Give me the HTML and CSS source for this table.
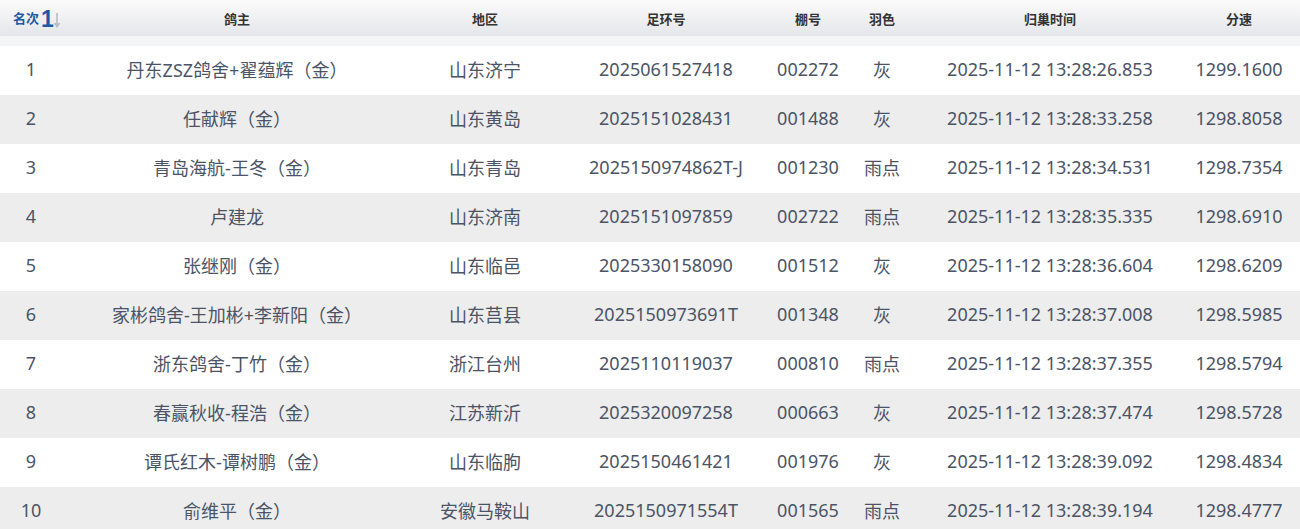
FILE: index.html
```html
<!DOCTYPE html>
<html lang="zh">
<head>
<meta charset="utf-8">
<link rel="stylesheet" href="styles.css">
</head>
<body>
<table class="grid">
  <colgroup>
    <col class="c1"><col class="c2"><col class="c3"><col class="c4"><col class="c5"><col class="c6"><col class="c7"><col class="c8">
  </colgroup>
  <thead>
    <tr class="head">
      <th class="sorted">名次<span class="sort"><span class="one">1</span><svg width="6" height="16" viewBox="0 0 6 16"><path d="M3 1V14M0.5 11L3 14.5L5.5 11" fill="none" stroke="#b9bcc2" stroke-width="1.6"/></svg></span></th>
      <th>鸽主</th><th>地区</th><th>足环号</th><th>棚号</th><th>羽色</th><th>归巢时间</th><th>分速</th>
    </tr>
    <tr class="spacer"><td colspan="8"></td></tr>
  </thead>
  <tbody>
    <tr><td>1</td><td>丹东ZSZ鸽舍+翟蕴辉（金）</td><td>山东济宁</td><td>2025061527418</td><td>002272</td><td>灰</td><td>2025-11-12 13:28:26.853</td><td>1299.1600</td></tr>
    <tr><td>2</td><td>任献辉（金）</td><td>山东黄岛</td><td>2025151028431</td><td>001488</td><td>灰</td><td>2025-11-12 13:28:33.258</td><td>1298.8058</td></tr>
    <tr><td>3</td><td>青岛海航-王冬（金）</td><td>山东青岛</td><td>2025150974862T-J</td><td>001230</td><td>雨点</td><td>2025-11-12 13:28:34.531</td><td>1298.7354</td></tr>
    <tr><td>4</td><td>卢建龙</td><td>山东济南</td><td>2025151097859</td><td>002722</td><td>雨点</td><td>2025-11-12 13:28:35.335</td><td>1298.6910</td></tr>
    <tr><td>5</td><td>张继刚（金）</td><td>山东临邑</td><td>2025330158090</td><td>001512</td><td>灰</td><td>2025-11-12 13:28:36.604</td><td>1298.6209</td></tr>
    <tr><td>6</td><td>家彬鸽舍-王加彬+李新阳（金）</td><td>山东莒县</td><td>2025150973691T</td><td>001348</td><td>灰</td><td>2025-11-12 13:28:37.008</td><td>1298.5985</td></tr>
    <tr><td>7</td><td>浙东鸽舍-丁竹（金）</td><td>浙江台州</td><td>2025110119037</td><td>000810</td><td>雨点</td><td>2025-11-12 13:28:37.355</td><td>1298.5794</td></tr>
    <tr><td>8</td><td>春赢秋收-程浩（金）</td><td>江苏新沂</td><td>2025320097258</td><td>000663</td><td>灰</td><td>2025-11-12 13:28:37.474</td><td>1298.5728</td></tr>
    <tr><td>9</td><td>谭氏红木-谭树鹏（金）</td><td>山东临朐</td><td>2025150461421</td><td>001976</td><td>灰</td><td>2025-11-12 13:28:39.092</td><td>1298.4834</td></tr>
    <tr><td>10</td><td>俞维平（金）</td><td>安徽马鞍山</td><td>2025150971554T</td><td>001565</td><td>雨点</td><td>2025-11-12 13:28:39.194</td><td>1298.4777</td></tr>
  </tbody>
</table>
</body>
</html>
```

FILE: styles.css
```css
html, body {
  margin: 0;
  padding: 0;
  background: #ffffff;
}
body {
  font-family: "Noto Sans", "Noto Sans CJK SC", sans-serif;
  overflow: hidden;
}
.grid {
  width: 1300px;
  border-collapse: collapse;
  table-layout: fixed;
}
.c1 { width: 62px; }
.c2 { width: 350px; }
.c3 { width: 146px; }
.c4 { width: 216px; }
.c5 { width: 68px; }
.c6 { width: 80px; }
.c7 { width: 256px; }
.c8 { width: 122px; }

.head th {
  height: 36px;
  padding: 0;
  font-size: 13px;
  font-weight: bold;
  color: #333333;
  text-align: center;
  vertical-align: middle;
  background: linear-gradient(#fbfbfc, #e5e6ea);
  white-space: nowrap;
}
.head th.sorted {
  color: #1d5aa6;
  text-align: left;
  padding-left: 13px;
}
.sort {
  display: inline-flex;
  align-items: flex-end;
  vertical-align: -4px;
  margin-left: 2px;
}
.one {
  font-family: "Liberation Sans", sans-serif;
  font-size: 23px;
  line-height: 20px;
  font-weight: bold;
  color: #1d5aa6;
}
.sort svg {
  margin-bottom: 1px;
}
.spacer td {
  height: 10px;
  padding: 0;
  background: #f4f5f7;
}
tbody td {
  height: 49px;
  box-sizing: border-box;
  padding: 0 0 3px 0;
  font-size: 18px;
  color: #4b5466;
  text-align: center;
  vertical-align: middle;
  white-space: nowrap;
}
tbody tr:nth-child(even) td {
  background: #ededed;
}
```
